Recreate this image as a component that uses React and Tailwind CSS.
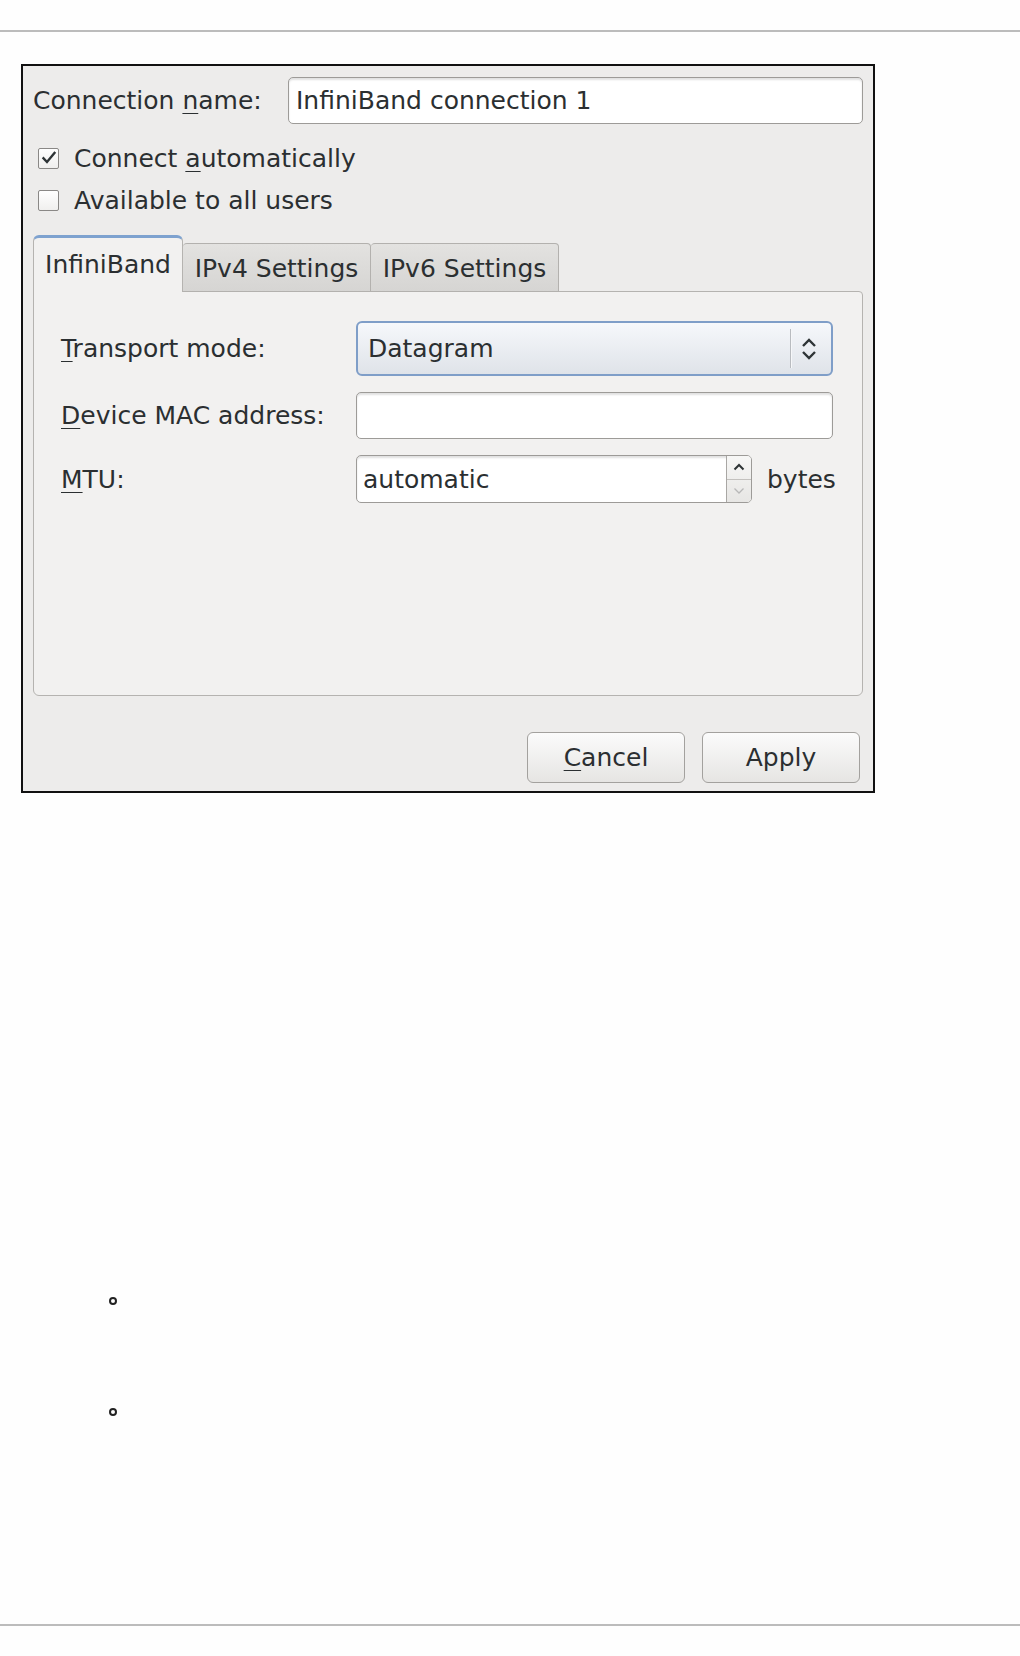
import React from "react";

const font = { fontFamily: '"DejaVu Sans", "Noto Sans", sans-serif' };

function U({ children }) {
  return <span className="underline decoration-1 underline-offset-[4px]">{children}</span>;
}

function Checkbox({ checked }) {
  return (
    <div className="w-[21px] h-[21px] rounded-[2px] border border-[#8a8886] bg-gradient-to-b from-[#ffffff] to-[#f0efee] flex items-center justify-center">
      {checked && (
        <svg width="16" height="16" viewBox="0 0 16 16">
          <path d="M2.5 8.2 L6 12 L13.5 3" fill="none" stroke="#2e3436" strokeWidth="2.4" strokeLinecap="square" />
        </svg>
      )}
    </div>
  );
}

export default function App() {
  return (
    <div className="w-[1020px] h-[1656px] bg-[#fefefe] flex flex-col text-[#2b2f31] text-[25px] leading-none" style={font}>
      <div className="mt-[30px] h-[2px] bg-[#bcbcbc]" />

      <div className="ml-[21px] mt-[32px] w-[854px] h-[729px] border-2 border-[#111] bg-[#edeceb] flex flex-col px-[10px]">
        {/* Connection name */}
        <div className="mt-[11px] h-[47px] flex items-center justify-between">
          <span>Connection <U>n</U>ame:</span>
          <div className="w-[575px] h-[47px] rounded-[5px] border border-[#9d9b98] bg-white shadow-[inset_0_2px_2px_rgba(0,0,0,0.12)] flex items-center pl-[7px]">
            InfiniBand connection 1
          </div>
        </div>

        {/* Checkboxes */}
        <div className="mt-[13px] h-[42px] flex items-center pl-[5px] gap-[15px]">
          <Checkbox checked />
          <span>Connect <U>a</U>utomatically</span>
        </div>
        <div className="h-[42px] flex items-center pl-[5px] gap-[15px]">
          <Checkbox />
          <span>Available to all users</span>
        </div>

        {/* Notebook */}
        <div className="mt-[15px] w-[830px] flex flex-col">
          <div className="flex items-end h-[56px] relative z-10 -mb-[1px]">
            <div className="w-[150px] h-[57px] rounded-t-[6px] border-x border-[#b5b3b0] border-t-[3px] border-t-[#7ea2cf] bg-[#f2f1f0] flex items-center justify-center pb-[2px]">
              InfiniBand
            </div>
            <div className="w-[188px] h-[49px] rounded-t-[4px] border border-l-0 border-[#b3b1ae] bg-gradient-to-b from-[#e3e2e0] to-[#d6d5d3] flex items-center justify-center pt-[2px]">
              IPv4 Settings
            </div>
            <div className="w-[188px] h-[49px] rounded-t-[4px] border border-l-0 border-[#b3b1ae] bg-gradient-to-b from-[#e3e2e0] to-[#d6d5d3] flex items-center justify-center pt-[2px]">
              IPv6 Settings
            </div>
          </div>
          <div className="h-[405px] border border-[#b5b3b0] rounded-b-[6px] rounded-tr-[4px] bg-[#f2f1f0] flex flex-col pt-[29px] pl-[27px]">
            {/* Transport mode */}
            <div className="flex items-center h-[55px]">
              <span className="w-[295px]"><U>T</U>ransport mode:</span>
              <div className="w-[477px] h-[55px] rounded-[6px] border-2 border-[#7f9ec8] bg-gradient-to-b from-[#f6f8fb] to-[#dfe3e9] flex items-center pl-[10px] relative">
                <span>Datagram</span>
                <div className="absolute left-[432px] top-[6px] bottom-[6px] w-[2px] bg-[#b9bcc0] border-r border-[#f6f7f9]" />
                <svg className="absolute left-[440px] top-[13px]" width="22" height="26" viewBox="0 0 22 26">
                  <path d="M5 10 L11 4 L17 10" fill="none" stroke="#2e3436" strokeWidth="2.4" />
                  <path d="M5 16 L11 22 L17 16" fill="none" stroke="#2e3436" strokeWidth="2.4" />
                </svg>
              </div>
            </div>
            {/* Device MAC */}
            <div className="flex items-center h-[47px] mt-[16px]">
              <span className="w-[295px]"><U>D</U>evice MAC address:</span>
              <div className="w-[477px] h-[47px] rounded-[5px] border border-[#9d9b98] bg-white shadow-[inset_0_2px_2px_rgba(0,0,0,0.12)]" />
            </div>
            {/* MTU */}
            <div className="flex items-center h-[48px] mt-[16px]">
              <span className="w-[295px]"><U>M</U>TU:</span>
              <div className="w-[396px] h-[48px] rounded-[5px] border border-[#9d9b98] bg-white shadow-[inset_0_2px_2px_rgba(0,0,0,0.12)] flex overflow-hidden">
                <div className="flex-1 flex items-center pl-[6px]">automatic</div>
                <div className="w-[25px] border-l border-[#a9a7a4] bg-gradient-to-b from-[#f7f7f6] to-[#e7e6e4] flex flex-col">
                  <div className="flex-1 flex items-center justify-center border-b border-[#c3c1be]">
                    <svg width="14" height="10" viewBox="0 0 14 10">
                      <path d="M2.5 7.5 L7 3 L11.5 7.5" fill="none" stroke="#2e3436" strokeWidth="2" />
                    </svg>
                  </div>
                  <div className="flex-1 flex items-center justify-center">
                    <svg width="14" height="10" viewBox="0 0 14 10">
                      <path d="M2.5 2.5 L7 7 L11.5 2.5" fill="none" stroke="#b8b8b8" strokeWidth="1.3" />
                    </svg>
                  </div>
                </div>
              </div>
              <span className="ml-[15px]">bytes</span>
            </div>
          </div>
        </div>

        {/* Buttons */}
        <div className="mt-auto mb-[8px] mr-[3px] flex justify-end gap-[17px]">
          <div className="w-[158px] h-[51px] rounded-[6px] border border-[#a3a19e] bg-gradient-to-b from-[#fbfbfb] to-[#e6e5e3] flex items-center justify-center">
            <span><U>C</U>ancel</span>
          </div>
          <div className="w-[158px] h-[51px] rounded-[6px] border border-[#a3a19e] bg-gradient-to-b from-[#fbfbfb] to-[#e6e5e3] flex items-center justify-center">
            <span>Apply</span>
          </div>
        </div>
      </div>

      {/* Empty list bullets */}
      <div className="ml-[109px] mt-[504px] w-[8px] h-[8px] rounded-full border-2 border-[#222]" />
      <div className="ml-[109px] mt-[103px] w-[8px] h-[8px] rounded-full border-2 border-[#222]" />

      <div className="mt-[208px] h-[2px] bg-[#bcbcbc]" />
    </div>
  );
}
